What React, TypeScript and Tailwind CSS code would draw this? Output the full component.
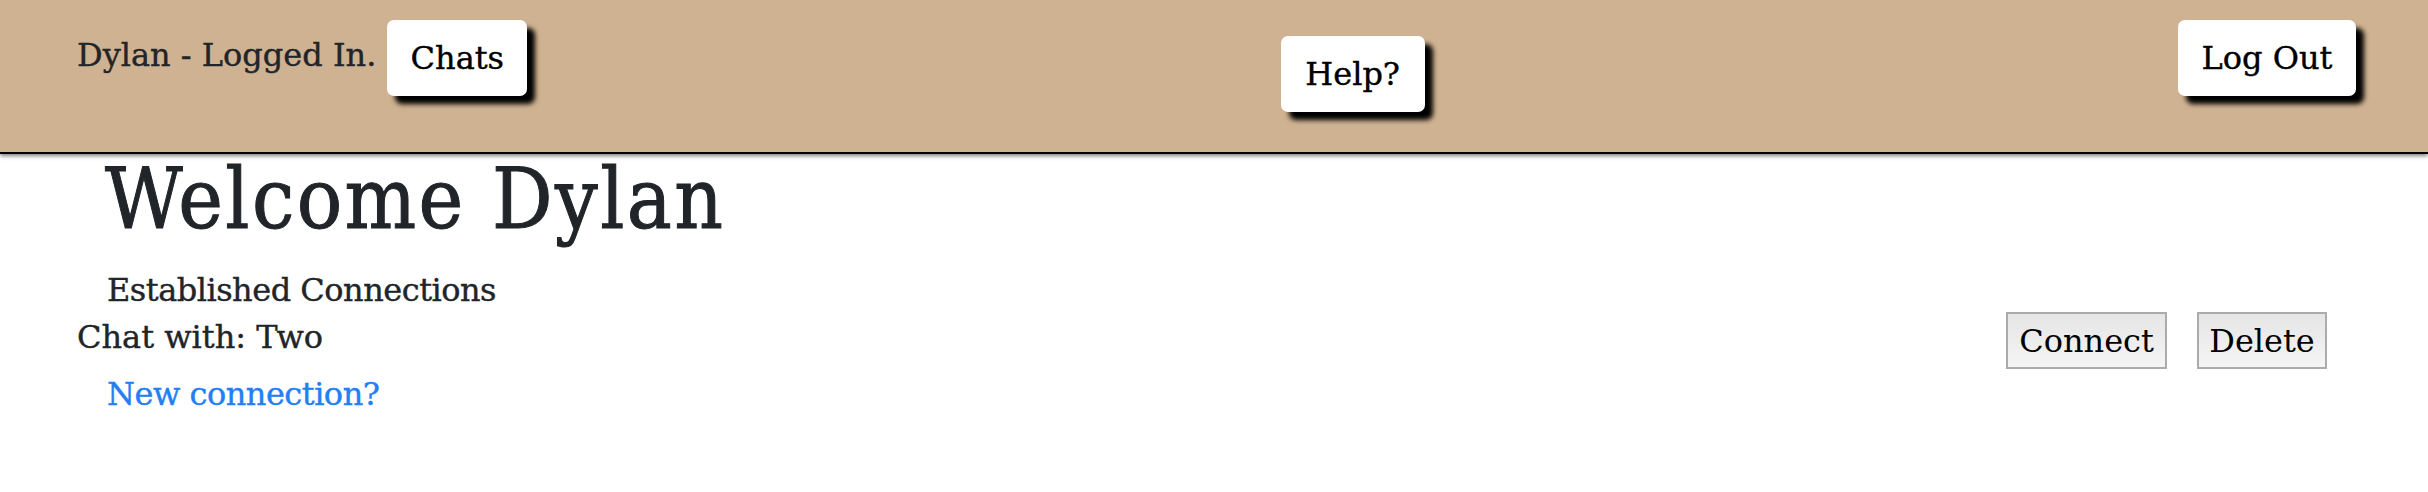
import React from "react";

export default function App() {
  return (
    <div className="min-h-[492px] bg-white font-['DejaVu_Serif',serif] text-[#212529] [-webkit-text-stroke:0.4px_currentColor]">
      <header className="flex h-[154px] items-start justify-between border-b-2 border-black bg-[#cfb291] pl-[77px] pr-[72px] pt-[20px] shadow-[0_2px_4px_rgba(0,0,0,0.5)]">
        <div className="flex items-start gap-[11px]">
          <span className="text-[32px] leading-[70px]">Dylan - Logged In.</span>
          <button className="h-[76px] w-[140px] rounded-[7px] bg-white text-[32px] text-black shadow-[8px_8px_5px_#000]">
            Chats
          </button>
        </div>
        <button className="mt-[16px] h-[76px] w-[144px] rounded-[7px] bg-white text-[32px] text-black shadow-[8px_8px_5px_#000]">
          Help?
        </button>
        <button className="h-[76px] w-[178px] rounded-[7px] bg-white text-[32px] text-black shadow-[8px_8px_5px_#000]">
          Log Out
        </button>
      </header>
      <main className="pl-[77px] pr-[101px]">
        <h1 className="mt-[3px] pl-[28px] text-[84px] font-normal leading-none tracking-[2.4px] [font-stretch:condensed] [-webkit-text-stroke:1px_currentColor]">
          Welcome Dylan
        </h1>
        <div className="mt-[29px] pl-[30px] text-[32px] leading-[40px] tracking-[-0.5px]">Established Connections</div>
        <div className="mt-[2px] flex items-start justify-between">
          <span className="mt-[5px] text-[32px] leading-[40px]">Chat with: Two</span>
          <div className="flex gap-[30px]">
            <button className="h-[57px] w-[161px] border-2 border-[#ababab] bg-gradient-to-b from-[#e5e5e5] to-[#f5f5f5] text-[32px] text-black [-webkit-text-stroke:0px]">
              Connect
            </button>
            <button className="h-[57px] w-[130px] border-2 border-[#ababab] bg-gradient-to-b from-[#e5e5e5] to-[#f5f5f5] text-[32px] text-black [-webkit-text-stroke:0px]">
              Delete
            </button>
          </div>
        </div>
        <div className="mt-[5px] pl-[30px] text-[32px] leading-[40px] tracking-[-0.5px]">
          <a href="#" className="text-[#2380f4]">New connection?</a>
        </div>
      </main>
    </div>
  );
}
